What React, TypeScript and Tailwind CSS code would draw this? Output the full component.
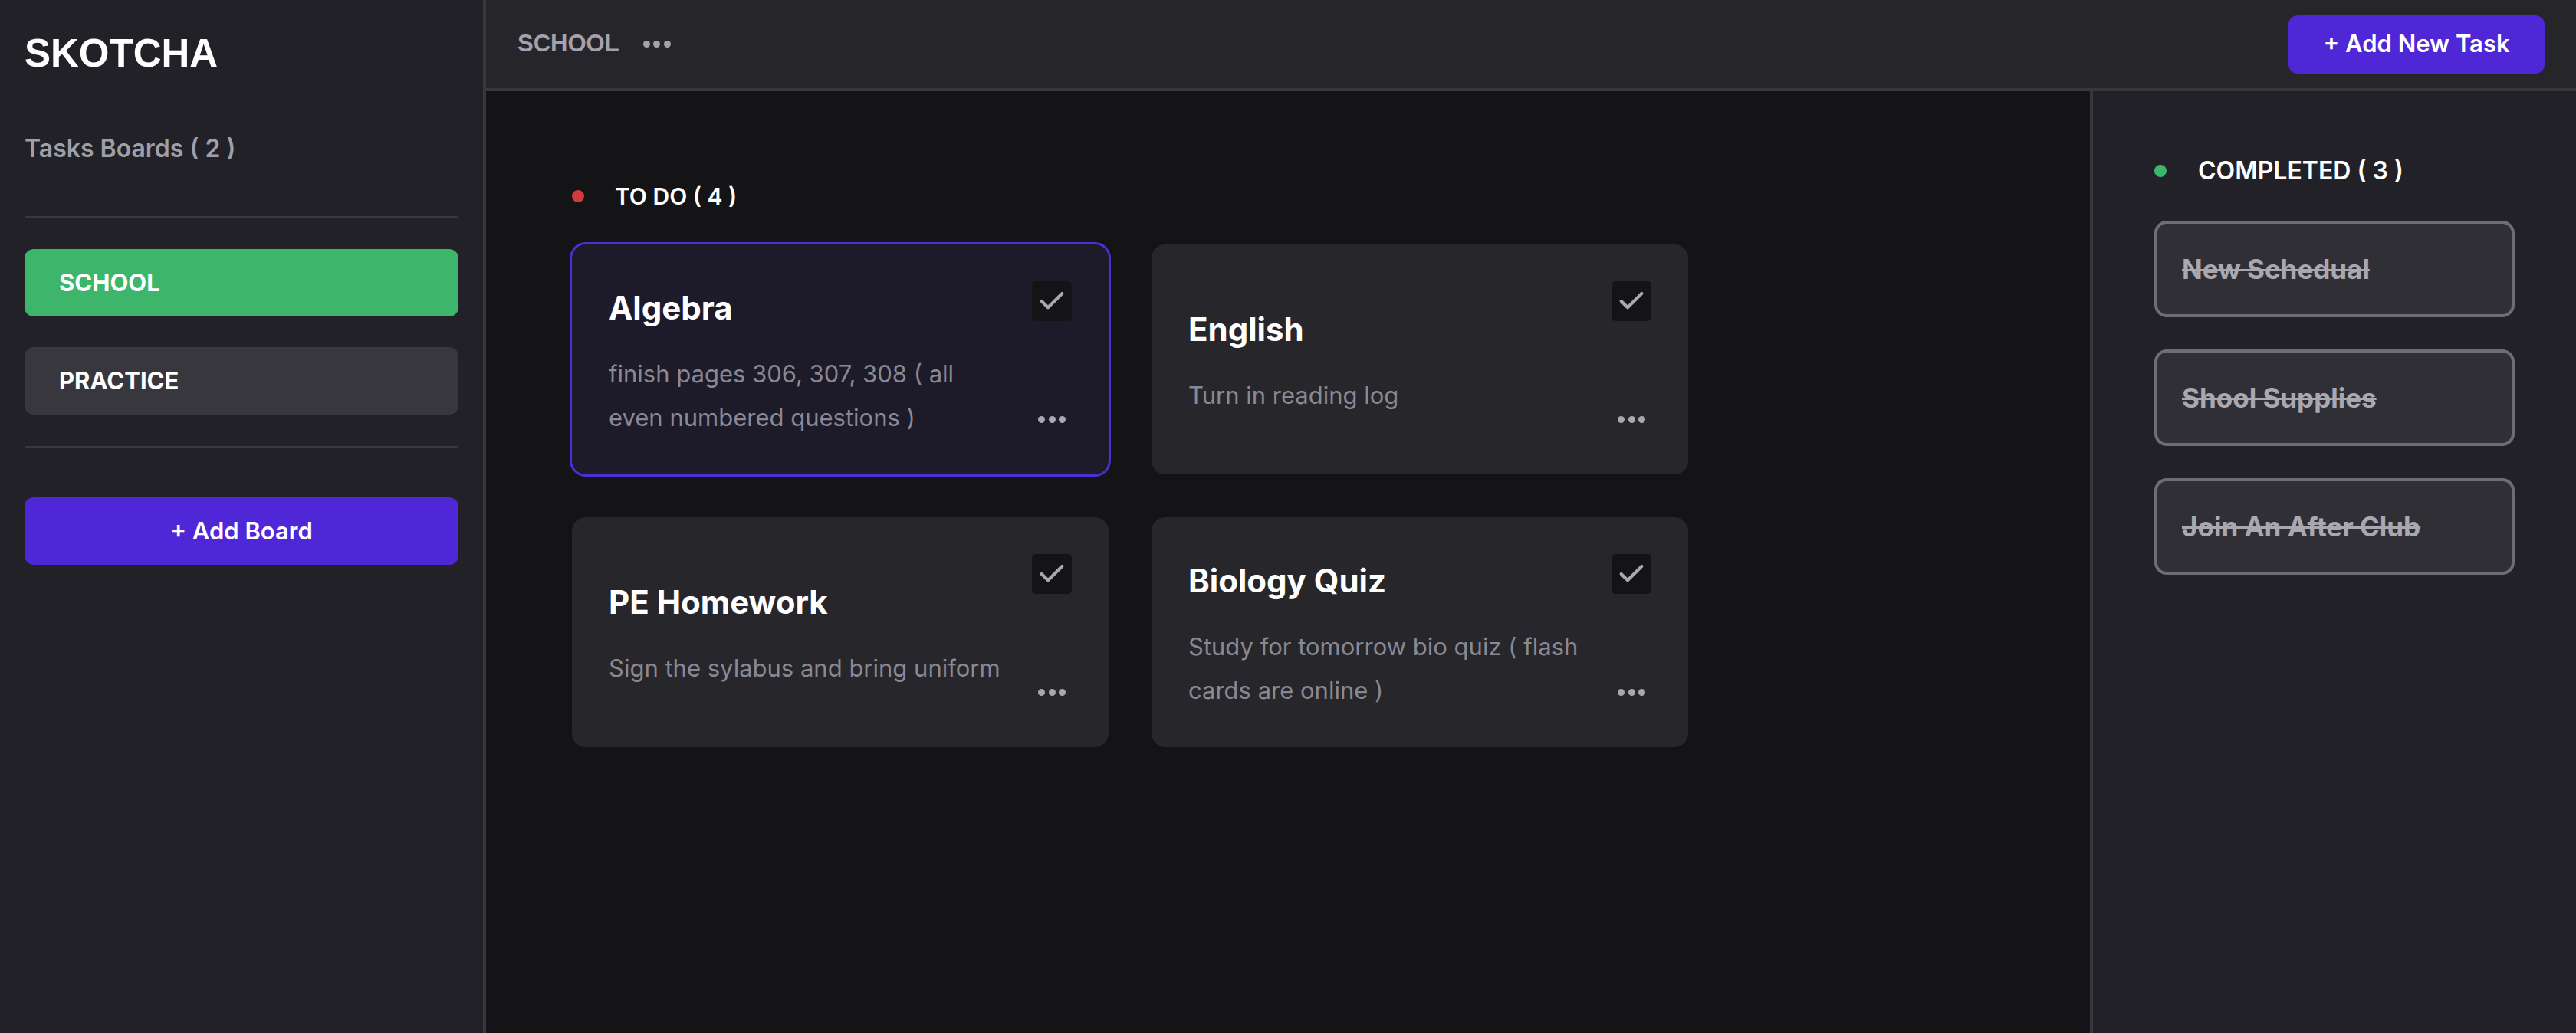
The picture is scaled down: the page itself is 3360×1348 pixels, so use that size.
import { Check } from 'lucide-react'

type Task = { title: string; desc: string; active?: boolean }

const todo: Task[] = [
    { title: 'Algebra', desc: 'finish pages 306, 307, 308 ( all even numbered questions )', active: true },
    { title: 'English', desc: 'Turn in reading log' },
    { title: 'PE Homework', desc: 'Sign the sylabus and bring uniform' },
    { title: 'Biology Quiz', desc: 'Study for tomorrow bio quiz ( flash cards are online )' },
]

const completed = ['New Schedual', 'Shool Supplies', 'Join An After Club']

/* three little dots used as a "more" button */
function Dots({ color = 'bg-[#a9a8b0]' }: { color?: string }) {
    return (
        <div className="flex items-center gap-[4.5px]">
            <span className={`h-[9px] w-[9px] rounded-full ${color}`} />
            <span className={`h-[9px] w-[9px] rounded-full ${color}`} />
            <span className={`h-[9px] w-[9px] rounded-full ${color}`} />
        </div>
    )
}

function TaskCard({ task }: { task: Task }) {
    return (
        <div
            className={`flex h-[300px] w-[700px] gap-[32px] rounded-[18px] p-[48px] ${
                task.active ? 'bg-[#1d1a2a] ring-[3px] ring-[#4f2ed6]' : 'bg-[#27262b]'
            }`}
        >
            <div className="flex flex-1 flex-col justify-center pt-[10px]">
                <h3 className="text-[42px] leading-[52px] font-bold text-white">{task.title}</h3>
                <p className="mt-[31px] max-w-[516px] text-[31px] leading-[57px] text-[#8a8893]">{task.desc}</p>
            </div>
            <div className="flex w-[52px] flex-col items-center justify-between">
                <div className="flex h-[52px] w-[52px] items-center justify-center rounded-[5px] bg-[#141416]">
                    <Check size={40} strokeWidth={2.5} color="#a9a8b0" />
                </div>
                <div className="flex h-[48px] items-center">
                    <Dots />
                </div>
            </div>
        </div>
    )
}

export default function App() {
    return (
        <div className="flex h-[1348px] w-[3360px] bg-[#141416] font-['Inter',sans-serif]">
            {/* ── Sidebar ── */}
            <aside className="w-[634px] shrink-0 border-r-4 border-[#38373e] bg-[#222127] px-[32px] pt-[44px]">
                <h1 className="font-['Liberation_Sans',Arial,sans-serif] text-[51px] leading-[52px] font-bold text-white">
                    SKOTCHA
                </h1>
                <p className="mt-[78px] text-[32px] leading-[40px] font-semibold text-[#a09fa8]">Tasks Boards ( 2 )</p>
                <div className="mt-[68px] h-[3px] bg-[#38373e]" />
                <div className="mt-[40px] flex flex-col gap-[40px]">
                    <button className="flex h-[88px] items-center rounded-[12px] bg-[#3db66b] pl-[45px] text-[31px] font-bold text-white">
                        SCHOOL
                    </button>
                    <button className="flex h-[88px] items-center rounded-[12px] bg-[#38373e] pl-[45px] text-[31px] font-bold text-white">
                        PRACTICE
                    </button>
                </div>
                <div className="mt-[41px] h-[3px] bg-[#38373e]" />
                <button className="mt-[64px] flex h-[88px] w-full items-center justify-center rounded-[12px] bg-[#4f27d6] text-[31px] font-semibold text-white">
                    + Add Board
                </button>
            </aside>

            <div className="flex flex-1 flex-col">
                {/* ── Header ── */}
                <header className="flex h-[119px] shrink-0 items-center justify-between border-b-4 border-[#38373e] bg-[#26252a] px-[41px]">
                    <div className="flex items-center gap-[31px]">
                        <span className="font-['Liberation_Sans',Arial,sans-serif] text-[31px] font-bold text-[#a4a2ab]">SCHOOL</span>
                        <Dots color="bg-[#a4a2ab]" />
                    </div>
                    <button className="flex h-[76px] w-[334px] items-center justify-center rounded-[12px] bg-[#4f27d6] text-[31px] font-semibold text-white">
                        + Add New Task
                    </button>
                </header>

                <div className="flex flex-1">
                    {/* ── To do column ── */}
                    <main className="flex-1 px-[112px] pt-[117px]">
                        <div className="flex items-center gap-[40px]">
                            <span className="h-[16px] w-[16px] rounded-full bg-[#d03a3f]" />
                            <h2 className="text-[30px] leading-[40px] font-semibold text-white">TO DO ( 4 )</h2>
                        </div>
                        <div className="mt-[43px] grid grid-cols-[700px_700px] gap-[56px]">
                            {todo.map(t => (
                                <TaskCard key={t.title} task={t} />
                            ))}
                        </div>
                    </main>

                    {/* ── Completed column ── */}
                    <section className="w-[634px] shrink-0 border-l-4 border-[#38373e] bg-[#222127] px-[80px] pt-[84px]">
                        <div className="flex items-center gap-[41px]">
                            <span className="h-[16px] w-[16px] rounded-full bg-[#3db66b]" />
                            <h2 className="text-[32px] leading-[40px] font-semibold text-white">COMPLETED ( 3 )</h2>
                        </div>
                        <div className="mt-[45px] flex flex-col gap-[42px]">
                            {completed.map(c => (
                                <div
                                    key={c}
                                    className="flex h-[126px] items-center rounded-[16px] border-4 border-[#6e6d76] bg-[#302f36] pl-[32px]"
                                >
                                    <span className="text-[35px] font-bold text-[#a9a7b0] line-through">{c}</span>
                                </div>
                            ))}
                        </div>
                    </section>
                </div>
            </div>
        </div>
    )
}
